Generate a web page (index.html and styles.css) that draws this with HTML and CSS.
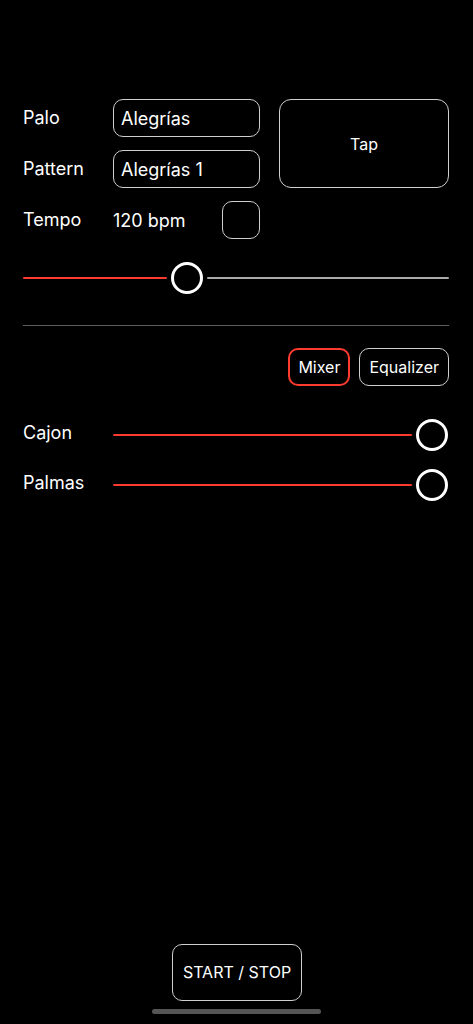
FILE: index.html
```html
<!DOCTYPE html>
<html lang="es">
<head>
<meta charset="utf-8">
<title>Compás</title>
<link rel="stylesheet" href="styles.css">
</head>
<body>
<div class="screen">
  <main class="content">
    <section class="top-grid">
      <div class="label">Palo</div>
      <div class="field">Alegrías</div>
      <button class="tap">Tap</button>
      <div class="label">Pattern</div>
      <div class="field">Alegrías 1</div>
      <div class="label">Tempo</div>
      <div class="tempo-cell">
        <span class="tempo-value">120 bpm</span>
        <span class="square"></span>
      </div>
    </section>

    <div class="slider tempo-slider">
      <span class="track fill" style="flex-grow: 144"></span>
      <span class="thumb"></span>
      <span class="track rest" style="flex-grow: 241"></span>
    </div>

    <hr class="divider">

    <div class="tabs">
      <button class="tab active">Mixer</button>
      <button class="tab">Equalizer</button>
    </div>

    <div class="mixer">
      <div class="mix-row">
        <div class="mix-label">Cajon</div>
        <div class="slider">
          <span class="track fill" style="flex-grow: 1"></span>
          <span class="thumb"></span>
        </div>
      </div>
      <div class="mix-row">
        <div class="mix-label">Palmas</div>
        <div class="slider">
          <span class="track fill" style="flex-grow: 1"></span>
          <span class="thumb"></span>
        </div>
      </div>
    </div>
  </main>

  <footer class="footer">
    <button class="start">START / STOP</button>
    <div class="home-indicator"></div>
  </footer>
</div>
</body>
</html>
```

FILE: styles.css
```css
* { box-sizing: border-box; }

html, body {
  margin: 0;
  padding: 0;
  background: #000;
}

body {
  font-family: Inter, "Noto Sans", "Liberation Sans", sans-serif;
  color: #fff;
}

.screen {
  min-height: 1024px;
  display: flex;
  flex-direction: column;
}

.content {
  padding: 99px 24px 0 23px;
  display: flex;
  flex-direction: column;
}

.top-grid {
  display: grid;
  grid-template-columns: 90px 147px 1fr;
  grid-auto-rows: 38px;
  row-gap: 13px;
  align-items: center;
}

.label {
  font-size: 18px;
  line-height: 1;
}

.field {
  height: 38px;
  border: 1px solid #cfcfcf;
  border-radius: 10px;
  font-size: 18px;
  display: flex;
  align-items: center;
  padding: 0 7px;
}

.tap {
  grid-column: 3;
  grid-row: 1 / span 2;
  height: 89px;
  margin-left: 19px;
  background: #000;
  color: #fff;
  border: 1px solid #cfcfcf;
  border-radius: 12px;
  font-family: inherit;
  font-size: 16px;
  padding: 0;
}

.tempo-cell {
  display: flex;
  align-items: center;
  justify-content: space-between;
  height: 38px;
}

.tempo-value {
  font-size: 18px;
}

.square {
  width: 38px;
  height: 38px;
  border: 1px solid #cfcfcf;
  border-radius: 10px;
}

.slider {
  display: flex;
  align-items: center;
  gap: 4px;
  height: 32px;
}

.tempo-slider {
  margin-top: 23px;
}

.track {
  height: 2px;
  border-radius: 1px;
  flex-basis: 0;
}

.fill { background: #ff3b30; }
.rest { background: #aaaaaa; }

.thumb {
  flex: 0 0 32px;
  width: 32px;
  height: 32px;
  border-radius: 50%;
  border: 3px solid #fff;
  background: #000;
}

.divider {
  border: 0;
  height: 1px;
  background: #5e5e5e;
  margin: 31px 0 0;
}

.tabs {
  display: flex;
  justify-content: flex-end;
  gap: 9px;
  margin-top: 22px;
}

.tab {
  height: 38px;
  background: #000;
  color: #fff;
  border: 1px solid #cfcfcf;
  border-radius: 10px;
  font-family: inherit;
  font-size: 16px;
  padding: 0 9px 1px;
}

.tab.active {
  border: 2px solid #ff3b30;
  padding: 0 8px 1px;
}

.mixer {
  margin-top: 33px;
  display: flex;
  flex-direction: column;
  gap: 18px;
}

.mix-row {
  display: flex;
  align-items: center;
}

.mix-label {
  width: 90px;
  font-size: 18px;
  padding-bottom: 5px;
}

.mix-row .slider {
  flex: 1;
  margin-right: 1px;
}

.footer {
  margin-top: auto;
  display: flex;
  flex-direction: column;
  align-items: center;
  padding-bottom: 10px;
}

.start {
  width: 130px;
  height: 57px;
  margin-left: 1px;
  background: #000;
  color: #fff;
  border: 1px solid #cfcfcf;
  border-radius: 10px;
  font-family: inherit;
  font-size: 16px;
  padding: 0 0 2px;
}

.home-indicator {
  width: 169px;
  height: 5px;
  margin-top: 8px;
  border-radius: 3px;
  background: #555;
}
```
